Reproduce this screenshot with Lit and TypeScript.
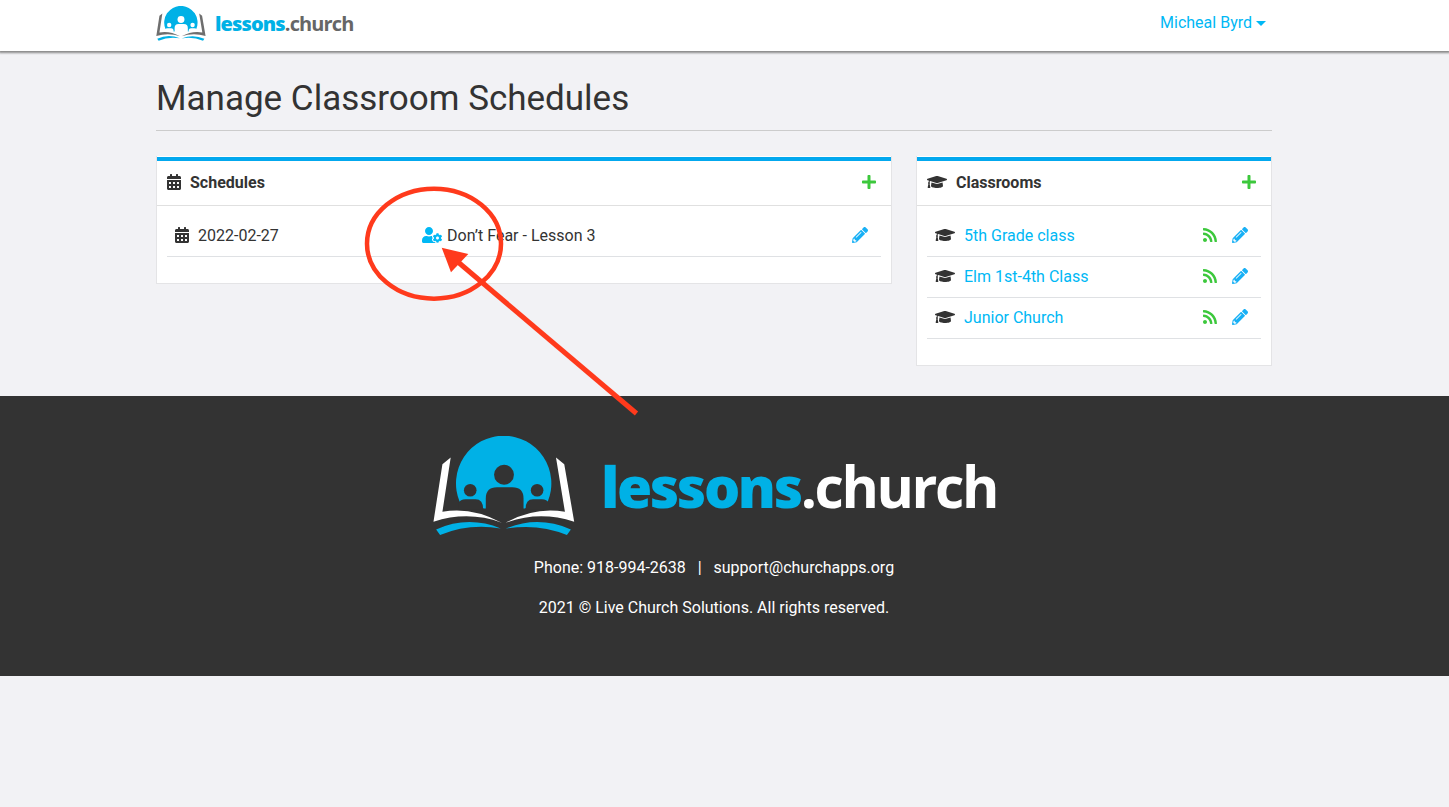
import { LitElement, html, css, svg } from 'lit';
import { customElement } from 'lit/decorators.js';

const ICONS: Record<string, [number, string]> = {
  calendar: [448, 'M0 464c0 26.5 21.5 48 48 48h352c26.5 0 48-21.5 48-48V192H0v272zm320-196c0-6.6 5.4-12 12-12h40c6.6 0 12 5.4 12 12v40c0 6.6-5.4 12-12 12h-40c-6.6 0-12-5.4-12-12v-40zm0 128c0-6.6 5.4-12 12-12h40c6.6 0 12 5.4 12 12v40c0 6.6-5.4 12-12 12h-40c-6.6 0-12-5.4-12-12v-40zM192 268c0-6.6 5.4-12 12-12h40c6.6 0 12 5.4 12 12v40c0 6.6-5.4 12-12 12h-40c-6.6 0-12-5.4-12-12v-40zm0 128c0-6.6 5.4-12 12-12h40c6.6 0 12 5.4 12 12v40c0 6.6-5.4 12-12 12h-40c-6.6 0-12-5.4-12-12v-40zM64 268c0-6.6 5.4-12 12-12h40c6.6 0 12 5.4 12 12v40c0 6.6-5.4 12-12 12H76c-6.6 0-12-5.4-12-12v-40zm0 128c0-6.6 5.4-12 12-12h40c6.6 0 12 5.4 12 12v40c0 6.6-5.4 12-12 12H76c-6.6 0-12-5.4-12-12v-40zM400 64h-48V16c0-8.8-7.2-16-16-16h-32c-8.8 0-16 7.2-16 16v48H160V16c0-8.8-7.2-16-16-16h-32c-8.8 0-16 7.2-16 16v48H48C21.5 64 0 85.5 0 112v48h448v-48c0-26.5-21.5-48-48-48z'],
  cap: [640, 'M622.34 153.2L343.4 67.5c-15.2-4.67-31.6-4.67-46.79 0L17.66 153.2c-23.54 7.23-23.54 38.36 0 45.59l48.63 14.94c-10.67 13.19-17.23 29.28-17.88 46.9C38.78 266.15 32 276.11 32 288c0 10.78 5.68 19.85 13.86 25.65L20.33 428.53C18.11 438.52 25.71 448 35.94 448h56.11c10.24 0 17.84-9.48 15.62-19.47L82.14 313.65C90.32 307.85 96 298.78 96 288c0-11.57-6.47-21.25-15.66-26.87.76-15.02 8.44-28.3 20.69-36.72L296.6 284.5c9.06 2.78 26.44 6.25 46.79 0l278.95-85.7c23.55-7.24 23.55-38.36 0-45.6zM352.79 315.09c-28.53 8.76-52.84 3.92-65.59 0l-145.02-44.55L128 384c0 35.35 85.96 64 192 64s192-28.65 192-64l-14.18-113.47-145.03 44.56z'],
  rss: [448, 'M128.081 415.959c0 35.369-28.672 64.041-64.041 64.041S0 451.328 0 415.959s28.672-64.041 64.041-64.041 64.04 28.673 64.04 64.041zm175.66 47.25c-8.354-154.6-132.185-278.587-286.95-286.95C7.656 175.765 0 183.105 0 192.253v48.069c0 8.415 6.49 15.472 14.887 16.018 111.832 7.284 201.473 96.702 208.772 208.772.547 8.397 7.604 14.887 16.018 14.887h48.069c9.149.001 16.489-7.655 15.995-16.79zm144.249.288C439.596 229.677 251.465 40.445 16.503 32.01 7.473 31.686 0 38.981 0 48.016v48.068c0 8.625 6.835 15.645 15.453 15.999 191.179 7.839 344.627 161.316 352.465 352.465.353 8.618 7.373 15.453 15.999 15.453h48.068c9.034-.001 16.329-7.474 16.005-16.504z'],
  pencil: [512, 'M497.9 142.1l-46.1 46.1c-4.7 4.7-12.3 4.7-17 0l-111-111c-4.7-4.7-4.7-12.3 0-17l46.1-46.1c18.7-18.7 49.1-18.7 67.9 0l60.1 60.1c18.8 18.7 18.8 49.1 0 67.9zM284.2 99.8L21.6 362.4.4 483.9c-2.9 16.4 11.4 30.6 27.8 27.8l121.5-21.3 262.6-262.6c4.7-4.7 4.7-12.3 0-17l-111-111c-4.8-4.7-12.4-4.7-17.1 0zM124.1 339.9c-5.5-5.5-5.5-14.3 0-19.8l154-154c5.5-5.5 14.3-5.5 19.8 0s5.5 14.3 0 19.8l-154 154c-5.5 5.5-14.3 5.5-19.8 0zM88 424h48v36.3l-64.5 11.3-31.1-31.1L51.7 376H88v48z'],
  plus: [448, 'M416 208H272V64c0-17.67-14.33-32-32-32h-32c-17.67 0-32 14.33-32 32v144H32c-17.67 0-32 14.33-32 32v32c0 17.67 14.33 32 32 32h144v144c0 17.67 14.33 32 32 32h32c17.67 0 32-14.33 32-32V304h144c17.67 0 32-14.33 32-32v-32c0-17.67-14.33-32-32-32z'],
  userCog: [640, 'M610.5 373.3c2.6-14.1 2.6-28.5 0-42.6l25.8-14.9c3-1.7 4.3-5.2 3.3-8.5-6.7-21.6-18.2-41.2-33.2-57.4-2.3-2.5-6-3.1-9-1.4l-25.8 14.9c-10.9-9.3-23.4-16.5-36.9-21.3v-29.8c0-3.4-2.4-6.4-5.7-7.1-22.3-5-45-4.8-66.2 0-3.3.7-5.7 3.7-5.7 7.1v29.8c-13.5 4.8-26 12-36.9 21.3l-25.8-14.9c-2.9-1.7-6.7-1.1-9 1.4-15 16.2-26.5 35.8-33.2 57.4-1 3.3.4 6.8 3.3 8.5l25.8 14.9c-2.6 14.1-2.6 28.5 0 42.6l-25.8 14.9c-3 1.7-4.3 5.2-3.3 8.5 6.7 21.6 18.2 41.1 33.2 57.4 2.3 2.5 6 3.1 9 1.4l25.8-14.9c10.9 9.3 23.4 16.5 36.9 21.3v29.8c0 3.4 2.4 6.4 5.7 7.1 22.3 5 45 4.8 66.2 0 3.3-.7 5.7-3.7 5.7-7.1v-29.8c13.5-4.8 26-12 36.9-21.3l25.8 14.9c2.9 1.7 6.7 1.1 9-1.4 15-16.2 26.5-35.8 33.2-57.4 1-3.3-.4-6.8-3.3-8.5l-25.8-14.9zM496 400.5c-26.8 0-48.5-21.8-48.5-48.5s21.8-48.5 48.5-48.5 48.5 21.8 48.5 48.5-21.7 48.5-48.5 48.5zM224 256c70.7 0 128-57.3 128-128S294.7 0 224 0 96 57.3 96 128s57.3 128 128 128zm201.2 226.5c-2.3-1.2-4.6-2.6-6.8-3.9l-7.9 4.6c-6 3.4-12.8 5.3-19.6 5.3-10.9 0-21.4-4.6-28.9-12.6-18.3-19.8-32.3-43.9-40.2-69.6-5.5-17.7 1.9-36.4 17.9-45.7l7.9-4.6c-.1-2.6-.1-5.2 0-7.8l-7.9-4.6c-16-9.2-23.4-28-17.9-45.7.9-2.9 2.2-5.8 3.2-8.7-3.8-.3-7.5-1.2-11.4-1.2h-16.7c-22.2 10.2-46.9 16-72.9 16s-50.6-5.8-72.9-16h-16.7C60.2 288 0 348.2 0 422.4V464c0 26.5 21.5 48 48 48h352c10.1 0 19.5-3.2 27.2-8.5-1.2-3.8-2-7.7-2-11.8v-9.2z'],
};

function icon(name: string, cls = '') {
  const [w, d] = ICONS[name];
  return html`<svg class="icon ${cls}" viewBox="0 0 ${w} 512" style="width:${w / 32}px"><path fill="currentColor" d=${d}></path></svg>`;
}

// book + dome mark, coordinates taken off the big footer logo
function mark(bg: string, page: string, cls: string) {
  const blue = '#00b1e6';
  return html`<svg class=${cls} viewBox="24 33 428 302">
    <path fill=${blue} d="M104.3 232A144 144 0 1 1 369.7 232L300 252H178Z"></path>
    <g fill=${bg}>
      <circle cx="238" cy="150" r="30"></circle>
      <circle cx="136" cy="197" r="19"></circle>
      <circle cx="338" cy="197" r="19"></circle>
      <path d="M183 292V222Q183 188 217 188H263Q297 188 297 222V292Z"></path>
      <path d="M100 254V236Q106 224 122 224H152Q175 224 175 254Z"></path>
      <path d="M374 254V236Q368 224 352 224H326Q303 224 303 254Z"></path>
    </g>
    <g fill=${page}>
      <path d="M77 98L52 118L25 292Q130 258 231 295Q140 246 52 262Z"></path>
      <path d="M395 98L420 118L450 292Q345 258 243 295Q332 246 422 262Z"></path>
    </g>
    <g fill=${blue}>
      <path d="M33 315Q130 272 228 312Q130 296 45 332Z"></path>
      <path d="M440 315Q340 272 243 313Q340 296 428 332Z"></path>
    </g>
  </svg>`;
}

const ROOMS = ['5th Grade class', 'Elm 1st-4th Class', 'Junior Church'];

@customElement('app-root')
export class AppRoot extends LitElement {
  static override styles = css`
    :host {
      display: block;
      position: relative;
      min-height: 807px;
      background: #f2f2f5;
      color: #333;
      font-family: Roboto, sans-serif;
      font-size: 16px;
      line-height: 24px;
    }
    a {
      color: #00b8f5;
      text-decoration: none;
    }
    .icon {
      display: block;
      height: 16px;
      flex: none;
    }
    .navbar {
      height: 51px;
      background: #fff;
      box-shadow: 0 1px 2px 1px #8a8a8a;
      position: relative;
    }
    .wrap {
      width: 1116px;
      margin-left: 156px;
    }
    .navbar .wrap {
      display: flex;
      justify-content: space-between;
      align-items: flex-start;
    }
    .brand {
      display: flex;
      align-items: center;
      padding-top: 6px;
    }
    .brand-mark {
      width: 50px;
      height: 35px;
    }
    .brand-text {
      margin-left: 9px;
      font: 700 20px/24px 'Open Sans', sans-serif;
      letter-spacing: -0.88px;
      color: #666;
    }
    .brand-text b {
      color: #00b1e6;
    }
    .user {
      display: flex;
      align-items: center;
      padding: 11px 6px 0 0;
    }
    .caret {
      width: 0;
      height: 0;
      margin-left: 4px;
      border: 5px solid transparent;
      border-top-color: #00b8f5;
      border-bottom: 0;
    }
    h1 {
      margin: 0;
      padding: 26px 0 10px;
      border-bottom: 1px solid #ccc;
      font-size: 35px;
      line-height: 43px;
      font-weight: 400;
    }
    .cols {
      display: grid;
      grid-template-columns: 736px 356px;
      gap: 24px;
      align-items: start;
      margin-top: 25px;
    }
    .card {
      background: #fff;
      border: 1px solid #e4e4e6;
      border-top: 0;
      padding-top: 1px;
      box-sizing: border-box;
      position: relative;
    }
    .card-head {
      display: flex;
      align-items: center;
      height: 44px;
      padding: 0 15px 0 10px;
      border-top: 4px solid #03a8ee;
      border-bottom: 1px solid #e0e0e0;
      font-weight: 700;
    }
    .card-head .icon,
    .row .icon {
      margin-top: -2px;
    }
    .card-head .icon:first-child {
      margin-right: 9px;
    }
    .plus {
      margin-left: auto;
      color: #3cc83c;
    }
    .card-body {
      padding: 10px 10px 26px;
    }
    .row {
      display: flex;
      align-items: center;
      height: 40px;
      padding: 0 13px 0 8px;
      border-bottom: 1px solid #dfe1e4;
    }
    .row .lead {
      margin-right: 9px;
    }
    .when {
      width: 247px;
      display: flex;
      align-items: center;
    }
    .cog {
      color: #00b8f5;
      margin-right: 5px;
    }
    .edit {
      margin-left: auto;
      color: #18b0f5;
    }
    .feed {
      margin-left: auto;
      margin-right: 15px;
      color: #3cc83c;
    }
    .feed + .edit {
      margin-left: 0;
    }
    footer {
      margin-top: 30px;
      height: 280px;
      box-sizing: border-box;
      padding: 40px 21px 0 0;
      background: #333;
      color: #fff;
      text-align: center;
    }
    .foot-logo {
      display: flex;
      justify-content: center;
      align-items: center;
      margin-left: 2px;
    }
    .foot-mark {
      width: 142px;
      height: 100px;
    }
    .foot-text {
      margin-left: 26px;
      font: 700 57px/72px 'Open Sans', sans-serif;
      letter-spacing: -2.4px;
    }
    .foot-text b {
      color: #00b1e6;
    }
    footer p {
      margin: 0;
    }
    .contact {
      margin-top: 20px;
    }
    .copy {
      margin-top: 16px;
    }
    .note {
      position: absolute;
      left: 0;
      top: 0;
      pointer-events: none;
    }
  `;

  override render() {
    return html`
      <div class="navbar">
        <div class="wrap">
          <div class="brand">
            ${mark('#fff', '#6e6e6e', 'brand-mark')}
            <span class="brand-text"><b>lessons</b>.church</span>
          </div>
          <a class="user" href="#">Micheal Byrd<span class="caret"></span></a>
        </div>
      </div>
      <div class="wrap">
        <h1>Manage Classroom Schedules</h1>
        <div class="cols">
          <div class="card">
            <div class="card-head">${icon('calendar')}<span>Schedules</span>${icon('plus', 'plus')}</div>
            <div class="card-body">
              <div class="row">
                <div class="when">${icon('calendar', 'lead')}<span>2022-02-27</span></div>
                ${icon('userCog', 'cog')}<span>Don’t Fear - Lesson 3</span>
                ${icon('pencil', 'edit')}
              </div>
            </div>
          </div>
          <div class="card">
            <div class="card-head">${icon('cap')}<span>Classrooms</span>${icon('plus', 'plus')}</div>
            <div class="card-body">
              ${ROOMS.map(
                (room) => html`
                  <div class="row">
                    ${icon('cap', 'lead')}<a href="#">${room}</a>
                    ${icon('rss', 'feed')}${icon('pencil', 'edit')}
                  </div>
                `,
              )}
            </div>
          </div>
        </div>
      </div>
      <footer>
        <div class="foot-logo">
          ${mark('#333', '#fff', 'foot-mark')}
          <span class="foot-text"><b>lessons</b>.church</span>
        </div>
        <p class="contact">Phone: 918-994-2638 &nbsp; | &nbsp; support@churchapps.org</p>
        <p class="copy">2021 © Live Church Solutions. All rights reserved.</p>
      </footer>
      <svg class="note" width="1449" height="807">
        ${svg`<ellipse cx="434" cy="243.7" rx="67" ry="55" fill="none" stroke="#ff3a1c" stroke-width="4.5"></ellipse>
        <line x1="636.5" y1="413.5" x2="458" y2="262" stroke="#ff3a1c" stroke-width="5"></line>
        <polygon points="441.7,247.7 468.3,254 451,272.3" fill="#ff3a1c"></polygon>`}
      </svg>
    `;
  }
}
